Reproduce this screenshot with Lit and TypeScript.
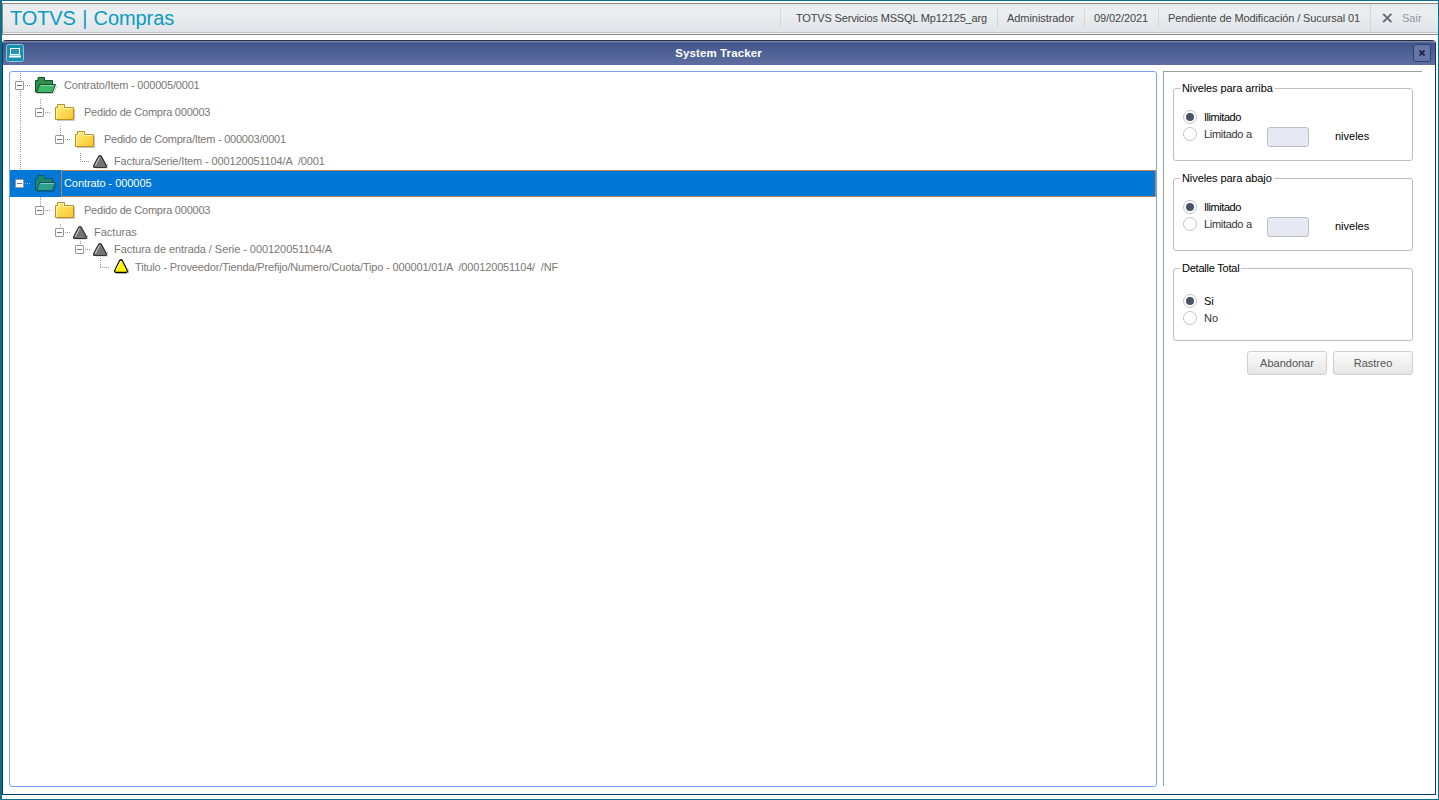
import { LitElement, html, css, svg, nothing } from "lit";
import { customElement, property } from "lit/decorators.js";

type Icon = "open" | "folder" | "cone" | "warn";
interface Row {
  level: number;
  height: number;
  icon: Icon;
  text: string;
  spacing: number;
  leaf?: boolean;
  selected?: boolean;
  trunk?: boolean;
}

const ROWS: Row[] = [
  { level: 0, height: 27, icon: "open", text: "Contrato/Item - 000005/0001", spacing: -0.19, trunk: true },
  { level: 1, height: 27, icon: "folder", text: "Pedido de Compra 000003", spacing: -0.23, trunk: true },
  { level: 2, height: 27, icon: "folder", text: "Pedido de Compra/Item - 000003/0001", spacing: -0.24, trunk: true },
  { level: 3, height: 17, icon: "cone", text: "Factura/Serie/Item - 000120051104/A  /0001", spacing: -0.13, leaf: true, trunk: true },
  { level: 0, height: 27, icon: "open", text: "Contrato - 000005", spacing: -0.07, selected: true },
  { level: 1, height: 27, icon: "folder", text: "Pedido de Compra 000003", spacing: -0.23 },
  { level: 2, height: 17, icon: "cone", text: "Facturas", spacing: 0 },
  { level: 3, height: 17, icon: "cone", text: "Factura de entrada / Serie - 000120051104/A", spacing: -0.06 },
  { level: 4, height: 18, icon: "warn", text: "Titulo - Proveedor/Tienda/Prefijo/Numero/Cuota/Tipo - 000001/01/A  /000120051104/  /NF", spacing: -0.155, leaf: true },
];

@customElement("tree-row")
class TreeRow extends LitElement {
  @property({ attribute: false }) row!: Row;

  static styles = css`
    :host { display: block; }
    .row { display: flex; color: #7a7775; font-size: 11px; }
    .row svg { display: block; flex: none; }
    .label { display: flex; align-items: center; white-space: pre; padding: 0 0 2px 2px; flex: 1; }
    .even { padding-bottom: 0; }
    .selected { background: #0078d7; color: #fff; }
    .selected .label {
      padding-left: 3px;
      background:
        repeating-linear-gradient(90deg, #ff8728 0 1px, #7d7a80 1px 2px) 0 0 / 100% 1px no-repeat,
        repeating-linear-gradient(90deg, #ff8728 0 1px, #7d7a80 1px 2px) 0 100% / 100% 1px no-repeat,
        repeating-linear-gradient(#ff8728 0 1px, #7d7a80 1px 2px) 0 0 / 1px 100% no-repeat,
        repeating-linear-gradient(#ff8728 0 1px, #7d7a80 1px 2px) 100% 0 / 1px 100% no-repeat;
    }
  `;

  private icon(kind: Icon, x: number, cy: number, selected: boolean) {
    if (kind === "open") {
      const back = selected ? "#1d8672" : "#2f9150";
      const front = selected ? "#2da08c" : "#3cb868";
      const edge = selected ? "#0d5560" : "#14502b";
      return svg`<g transform="translate(${x} ${cy - 8})">
        <path d="M2 16.500h17l3-8" fill="none" stroke="#000" stroke-opacity=".2"/>
        <path d="M.5 15V3.500h2.500V.5h6.500v3h8V15z" fill=${back} stroke=${edge}/>
        <path d="M1.500 15.500 4.500 7.500h16l-3 8z" fill=${front} stroke=${edge}/>
        <path d="M5.500 8.500h13.500" stroke="#fff" stroke-opacity=".4"/>
      </g>`;
    }
    if (kind === "folder") {
      return svg`<g transform="translate(${x} ${cy - 8})">
        <path d="M2 16.500h17.500V5" fill="none" stroke="#000" stroke-opacity=".22"/>
        <path d="M.5 15.500v-12h2V.5h7v3h9v12z" fill="url(#gold)" stroke="#bd8f20"/>
        <path d="M1.500 14.500v-10h2v-3h5v3h9" fill="none" stroke="#fff3b0"/>
      </g>`;
    }
    const warn = kind === "warn";
    return svg`<g transform="translate(${x} ${cy - (warn ? 8 : 6)})">
      <path d=${warn ? "M3 14h11.500V10" : "M3 13h11.500V9"} fill="none" stroke="#000" stroke-opacity=".22"/>
      <path transform=${warn ? "scale(1 1.08)" : "scale(1 1)"} d="M7 .7C8.200.7 8.500 1.500 9 2.500l4 7.500c.8 1.700.3 2.500-1 2.500H2C.7 12.500.2 11.700 1 10l4-7.500C5.500 1.500 5.800.7 7 .7z" fill=${warn ? "#fff200" : "#747474"} stroke=${warn ? "#000" : "#303030"} stroke-width="1.200"/>
      <path d="M6.500 2.500 2.300 10.500" fill="none" stroke="#fff" stroke-opacity=".75"/>
    </g>`;
  }

  render() {
    const r = this.row;
    const x = 5 + 20 * r.level;
    const cy = Math.floor(r.height / 2);
    const iconX = r.icon === "warn" ? x + 19 : r.icon === "cone" ? x + 18 : x + 20;
    const folder = r.icon === "open" || r.icon === "folder";
    const base = folder ? (r.level === 0 ? 52 : x + 47) : r.icon === "warn" ? x + 38 : x + 37;
    const width = r.selected ? 51 : base;
    const line = r.selected ? "#8fb8dc" : "#999";
    return html`<div class="row ${r.selected ? "selected" : ""}" style="height:${r.height}px">
      <svg width=${width} height=${r.height}>
        <defs><linearGradient id="gold" x2="1" y2="1"><stop offset="0" stop-color="#fff07a"/><stop offset="1" stop-color="#f6c52c"/></linearGradient></defs>
        ${r.trunk ? svg`<path d="M10.500 1V${r.height}" stroke="#999" stroke-dasharray="1 1"/>` : nothing}
        ${r.level ? svg`<path d="M${x + 5.5} 0V${cy}" stroke=${line} stroke-dasharray="1 1"/>` : nothing}
        <path d="M${r.leaf ? x + 5 : x + 10} ${cy + 0.5}h${r.leaf ? 9 : 5}" stroke=${line} stroke-dasharray="1 1"/>
        ${r.leaf ? nothing : svg`<rect x=${x + 0.5} y=${cy - 3.5} width="8" height="8" rx=".5" fill="#fff" stroke="#969696"/><path d="M${x + 2} ${cy + 0.5}h5" stroke="#777"/>`}
        ${this.icon(r.icon, iconX, cy, !!r.selected)}
      </svg>
      <span class="label ${r.height % 2 ? "" : "even"}" style="letter-spacing:${r.spacing}px">${r.text}</span>
    </div>`;
  }
}

@customElement("app-root")
class AppRoot extends LitElement {
  static styles = css`
    :host { display: block; font-family: "Liberation Sans", Arial, sans-serif; font-size: 11px; color: #000; }
    * { box-sizing: border-box; }
    .page { height: 800px; border: 1px solid #0a6f86; border-left-width: 2px; background: #fff; padding-top: 2px; display: flex; flex-direction: column; overflow: hidden; }
    .bar { height: 32px; flex: none; border: 1px solid #8a8a8a; border-right: 0; background: linear-gradient(#e6eaed 0, #eceff1 8px, #e0e4e8 28px, #c0c6c9 28px, #c0c6c9 29px, #f3f3f3 29px); display: flex; padding-right: 17px; }
    .brand { font-size: 20px; line-height: 28px; color: #0a9bc2; padding-left: 7px; flex: 1; white-space: pre; letter-spacing: -.1px; word-spacing: .9px; }
    .cell { height: 18px; margin-top: 5px; border-left: 1px solid #d3d6d6; color: #454545; line-height: 19px; padding-left: 9px; white-space: pre; }
    .c1 { width: 217px; padding-left: 15px; letter-spacing: -.16px; }
    .c2 { width: 87px; letter-spacing: -.06px; }
    .c3 { width: 74px; letter-spacing: -.1px; }
    .c4 { width: 212px; letter-spacing: -.11px; }
    .exit { width: 51px; height: 28px; margin-top: 0; line-height: 29px; padding-left: 11px; display: flex; gap: 9px; color: #8f979f; align-items: center; }
    .exit svg { flex: none; }
    .window { margin: 5px 2px 4px 0; flex: 1; border: 1px solid #063a66; border-top-color: #2b2f3c; border-radius: 4px 4px 0 0; min-height: 0; display: flex; flex-direction: column; }
    .title { height: 24px; flex: none; background: linear-gradient(#8794b9 0, #42568c 2px, #5f6ea0 24px); border-radius: 3px 3px 0 0; display: grid; grid-template-columns: 18px 1fr 18px; align-items: center; padding: 0 4px 0 3px; color: #fff; font-size: 11.5px; font-weight: bold; text-align: center; letter-spacing: .1px; }
    .title svg { display: block; }
    .close { width: 18px; height: 18px; border: 1px solid #303f6f; border-radius: 3px; background: #6776a5; display: grid; place-items: center; }
    .content { flex: 1; display: grid; grid-template-columns: 1148px 259px; gap: 6px; padding: 6px 0 7px 6px; min-height: 0; }
    .tree { border: 1px solid #79a3f4; border-radius: 3px; }
    .side { border: solid #9c9c9c; border-width: 1px 0 0 1px; padding: 16px 9px 0; display: flex; flex-direction: column; margin-bottom: 1px; }
    .group { height: 73px; margin-bottom: 17px; border: 1px solid #bfbfbf; border-radius: 3px; display: flex; flex-direction: column; }
    .legend { align-self: flex-start; background: #fff; height: 12px; line-height: 12px; margin: -7px 0 1px 6px; padding: 0 2px; white-space: pre; letter-spacing: -.08px; }
    .legend.total { letter-spacing: -.22px; }
    .opts { display: grid; grid-template-columns: 84px 68px 1fr; padding: 13px 0 0 9px; }
    .opts.low { padding-top: 17px; }
    .opt { height: 17px; display: flex; align-items: center; gap: 7px; white-space: pre; letter-spacing: -.45px; }
    .off { color: #333; letter-spacing: -.3px; }
    .low .opt { letter-spacing: 0; }
    .num { width: 42px; height: 20px; background: #e6e9f1; border: 1px solid #bcc0c5; border-radius: 3px; margin-top: 2px; }
    .word { line-height: 22px; }
    .radio { width: 14px; height: 14px; border: 1px solid #c4c4c4; border-radius: 50%; background: #fff; display: grid; place-items: center; }
    .dot { width: 8px; height: 8px; border-radius: 50%; background: #465369; }
    .buttons { display: flex; justify-content: flex-end; gap: 6px; margin-top: -7px; }
    .btn { width: 80px; height: 24px; border: 1px solid #cfcfcf; border-radius: 3px; background: linear-gradient(#fbfbfb, #e6e6e6); color: #555; text-align: center; line-height: 23px; }
  `;

  private option(text: string, on: boolean) {
    return html`<div class="opt ${on ? "" : "off"}"><span class="radio">${on ? html`<span class="dot"></span>` : nothing}</span>${text}</div>`;
  }

  private levels(title: string) {
    return html`<div class="group"><div class="legend">${title}</div>
      <div class="opts">
        ${this.option("Ilimitado", true)}<span></span><span></span>
        ${this.option("Limitado a", false)}<span class="num"></span><span class="word">niveles</span>
      </div></div>`;
  }

  render() {
    return html`<div class="page">
      <div class="bar">
        <div class="brand">TOTVS | Compras</div>
        <div class="cell c1">TOTVS Servicios MSSQL Mp12125_arg</div>
        <div class="cell c2">Administrador</div>
        <div class="cell c3">09/02/2021</div>
        <div class="cell c4">Pendiente de Modificación / Sucursal 01</div>
        <div class="cell exit"><svg width="11" height="10"><path d="M1.200.9 9.400 9.100M9.400.9 1.200 9.100" stroke="#626a74" stroke-width="2"/></svg>Sair</div>
      </div>
      <div class="window">
        <div class="title">
          <svg width="18" height="18"><rect x=".5" y=".5" width="17" height="17" rx="2" fill="#178fae" stroke="#8cc9d8"/><rect x="4.500" y="4.500" width="9" height="6" fill="#2397b3" stroke="#fff"/><path d="M3 12.500h12" stroke="#fff" stroke-width="2"/></svg>
          <span>System Tracker</span>
          <span class="close"><svg width="6" height="6"><path d="M.5.5l5 5M5.500.5l-5 5" stroke="#17203c" stroke-width="1.700"/></svg></span>
        </div>
        <div class="content">
          <div class="tree">${ROWS.map((row) => html`<tree-row .row=${row}></tree-row>`)}</div>
          <div class="side">
            ${this.levels("Niveles para arriba")}
            ${this.levels("Niveles para abajo")}
            <div class="group"><div class="legend total">Detalle Total</div>
              <div class="opts low">${this.option("Si", true)}<span></span><span></span>${this.option("No", false)}</div></div>
            <div class="buttons"><div class="btn">Abandonar</div><div class="btn">Rastreo</div></div>
          </div>
        </div>
      </div>
    </div>`;
  }
}
